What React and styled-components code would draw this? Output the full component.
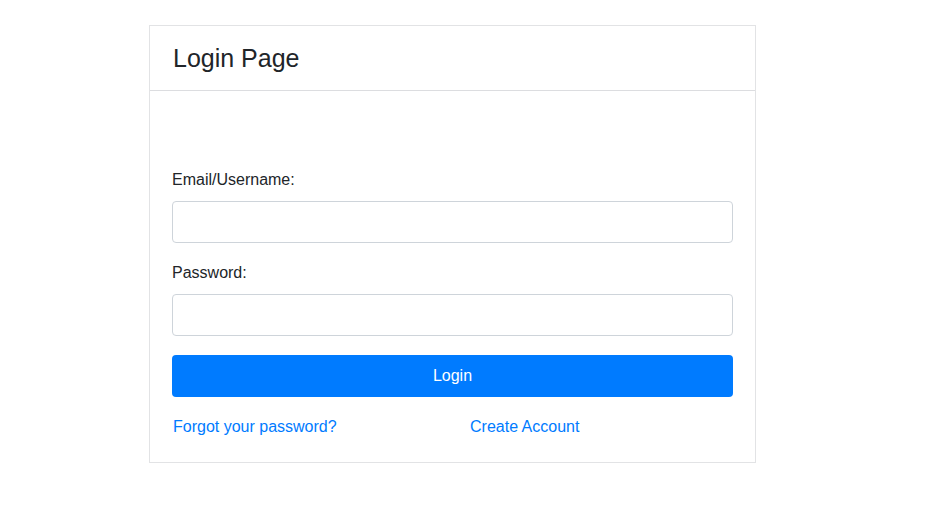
import React from 'react';
import styled, { createGlobalStyle } from 'styled-components';

const GlobalStyle = createGlobalStyle`
  html, body {
    margin: 0;
    padding: 0;
    background: #fff;
    font-family: "Liberation Sans", Arial, sans-serif;
    color: #212529;
  }
  * { box-sizing: border-box; }
`;

const Page = styled.div`
  padding: 25px 0 0 149px;
`;

const Card = styled.div`
  width: 607px;
  border: 1px solid #e2e3e5;
  background: #fff;
`;

const CardHeader = styled.div`
  height: 65px;
  padding: 0 23px 1px;
  display: flex;
  align-items: center;
  border-bottom: 1px solid #dcdde0;
`;

const Title = styled.h2`
  margin: 0;
  font-size: 25px;
  font-weight: 400;
  line-height: 1.2;
`;

const CardBody = styled.form`
  padding: 77px 22px 23px;
  display: flex;
  flex-direction: column;
`;

const Label = styled.label`
  font-size: 16px;
  line-height: 24px;
  margin-bottom: 9px;
`;

const Input = styled.input`
  height: 42px;
  width: 100%;
  border: 1px solid #ced4da;
  border-radius: 4px;
  font-size: 16px;
  padding: 6px 12px;
  margin-bottom: ${p => p.$gap || 0}px;
  outline: none;
`;

const Button = styled.button`
  height: 42px;
  width: 100%;
  border: none;
  border-radius: 4px;
  background: #007bff;
  color: #fff;
  font-family: inherit;
  font-size: 16px;
  cursor: pointer;
  margin-bottom: 18px;
`;

const Links = styled.div`
  display: flex;
  line-height: 24px;
`;

const LinkText = styled.a`
  color: #007bff;
  font-size: 16px;
  text-decoration: none;
  width: ${p => p.$width || 'auto'};
  padding-left: 1px;
`;

export default function App() {
  return (
    <>
      <GlobalStyle />
      <Page>
        <Card>
          <CardHeader>
            <Title>Login Page</Title>
          </CardHeader>
          <CardBody onSubmit={e => e.preventDefault()}>
            <Label>Email/Username:</Label>
            <Input type="text" $gap={18} />
            <Label>Password:</Label>
            <Input type="password" $gap={19} />
            <Button type="submit">Login</Button>
            <Links>
              <LinkText href="#" $width="297px">Forgot your password?</LinkText>
              <LinkText href="#">Create Account</LinkText>
            </Links>
          </CardBody>
        </Card>
      </Page>
    </>
  );
}
